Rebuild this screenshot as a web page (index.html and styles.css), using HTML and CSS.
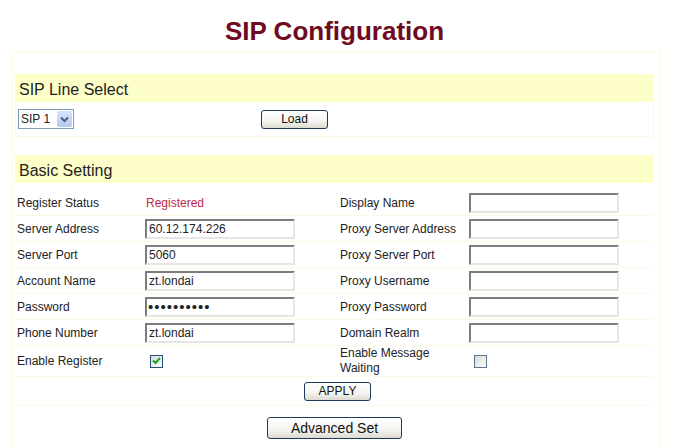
FILE: index.html
```html
<!DOCTYPE html>
<html lang="en">
<head>
    <meta charset="UTF-8">
    <title>SIP Configuration</title>
    <link rel="stylesheet" href="styles.css">
</head>
<body>
    <h1 class="title">SIP Configuration</h1>

    <div class="panel">
        <div class="spacer"></div>
        <div class="section-head">SIP Line Select</div>
        <div class="line-row">
            <div class="combo">
                <span class="combo-text">SIP 1</span>
                <span class="combo-arrow">
                    <svg width="9" height="7" viewBox="0 0 9 7"><path d="M1 1.5 L4.5 5 L8 1.5" fill="none" stroke="#4d6185" stroke-width="2"/></svg>
                </span>
            </div>
            <div class="load-cell"><button class="btn btn-small">Load</button></div>
        </div>

        <div class="spacer spacer-mid"></div>
        <div class="section-head">Basic Setting</div>

        <div class="form-grid">
            <div class="cell label">Register Status</div>
            <div class="cell status">Registered</div>
            <div class="cell label">Display Name</div>
            <div class="cell"><input class="field" type="text" value=""></div>

            <div class="cell label">Server Address</div>
            <div class="cell"><input class="field" type="text" value="60.12.174.226"></div>
            <div class="cell label">Proxy Server Address</div>
            <div class="cell"><input class="field" type="text" value=""></div>

            <div class="cell label">Server Port</div>
            <div class="cell"><input class="field" type="text" value="5060"></div>
            <div class="cell label">Proxy Server Port</div>
            <div class="cell"><input class="field" type="text" value=""></div>

            <div class="cell label">Account Name</div>
            <div class="cell"><input class="field" type="text" value="zt.londai"></div>
            <div class="cell label">Proxy Username</div>
            <div class="cell"><input class="field" type="text" value=""></div>

            <div class="cell label">Password</div>
            <div class="cell"><input class="field field-secret" type="password" value="abcdefghij"></div>
            <div class="cell label">Proxy Password</div>
            <div class="cell"><input class="field" type="text" value=""></div>

            <div class="cell label">Phone Number</div>
            <div class="cell"><input class="field" type="text" value="zt.londai"></div>
            <div class="cell label">Domain Realm</div>
            <div class="cell"><input class="field" type="text" value=""></div>

            <div class="cell label tall">Enable Register</div>
            <div class="cell tall">
                <span class="check">
                    <svg width="9" height="8" viewBox="0 0 9 8"><path d="M1 3.5 L3.5 6 L8 1" fill="none" stroke="#21a121" stroke-width="2"/></svg>
                </span>
            </div>
            <div class="cell label tall">Enable Message<br>Waiting</div>
            <div class="cell tall"><span class="check check-off"></span></div>
        </div>

        <div class="apply-row"><button class="btn btn-small btn-apply">APPLY</button></div>
        <div class="advanced-row"><button class="btn btn-wide">Advanced Set</button></div>
    </div>
</body>
</html>
```

FILE: styles.css
```css
body {
    margin: 0;
    font-family: "Liberation Sans", Arial, sans-serif;
    font-size: 12px;
    color: #222;
    background: #fff;
}
.title {
    margin: 16px 0 5px;
    padding-right: 10px;
    height: 30px;
    line-height: 30px;
    text-align: center;
    font-size: 26px;
    font-weight: bold;
    color: #6e0b20;
}
.panel {
    margin-left: 12px;
    width: 639px;
    border: 1px solid #fcfae2;
    padding: 1px 6px 8px 2px;
}
.spacer {
    height: 21px;
}
.spacer-mid {
    height: 18px;
}
.section-head {
    height: 28px;
    line-height: 31px;
    padding-left: 4px;
    font-size: 16px;
    background-color: #fefec9;
    color: #222;
}
.line-row {
    display: grid;
    grid-template-columns: 245px 1fr;
    align-items: center;
    height: 34px;
    border: 1px solid #fcfae6;
    border-top: none;
}
.combo {
    display: flex;
    align-items: center;
    width: 54px;
    height: 18px;
    margin-left: 2px;
    border: 1px solid #7f9db9;
    background: #fff;
}
.combo-text {
    flex: 1;
    padding-left: 2px;
}
.combo-arrow {
    display: flex;
    align-items: center;
    justify-content: center;
    width: 15px;
    height: 16px;
    margin-right: 1px;
    border-radius: 2px;
    background: linear-gradient(#d8e4fc, #b4c8f2);
}
.btn {
    font-family: "Liberation Sans", Arial, sans-serif;
    color: #111;
    border: 1px solid #1e3a5a;
    border-radius: 3px;
    background: linear-gradient(#ffffff, #f4f4f0 60%, #dcdad0);
    padding: 0;
}
.btn-small {
    width: 67px;
    height: 19px;
    font-size: 12px;
}
.form-grid {
    display: grid;
    grid-template-columns: 129px 194px 130px 1fr;
    margin-top: 7px;
}
.cell {
    display: flex;
    align-items: center;
    height: 25px;
    border-bottom: 1px solid #fcfae6;
    padding-left: 2px;
}
.label {
    color: #222;
}
.status {
    color: #c2284a;
}
.tall {
    height: 30px;
    line-height: 15px;
}
.field {
    box-sizing: border-box;
    width: 150px;
    height: 20px;
    margin: 0 0 0 -1px;
    padding: 0 2px;
    font-family: "Liberation Sans", Arial, sans-serif;
    font-size: 12px;
    color: #222;
    border: 2px solid;
    border-color: #7c7c7c #e6e6e6 #e6e6e6 #7c7c7c;
    background: #fff;
    outline: none;
}
.field-secret {
    font-size: 15px;
    letter-spacing: 1px;
    padding-left: 1px;
}
.check {
    display: flex;
    align-items: center;
    justify-content: center;
    box-sizing: border-box;
    width: 13px;
    height: 13px;
    margin-left: 4px;
    border: 1px solid #1c5180;
    background: linear-gradient(135deg, #dcdcd5, #fbfbf9);
}
.check-off {
    margin-left: 4px;
    border-color: #5a7590;
}
.apply-row {
    display: flex;
    justify-content: center;
    align-items: center;
    height: 28px;
    border-bottom: 1px solid #fcfae6;
}
.btn-apply {
    margin-left: 6px;
}
.advanced-row {
    display: flex;
    justify-content: center;
    padding-top: 11px;
}
.btn-wide {
    width: 135px;
    height: 22px;
    font-size: 14px;
}
```
